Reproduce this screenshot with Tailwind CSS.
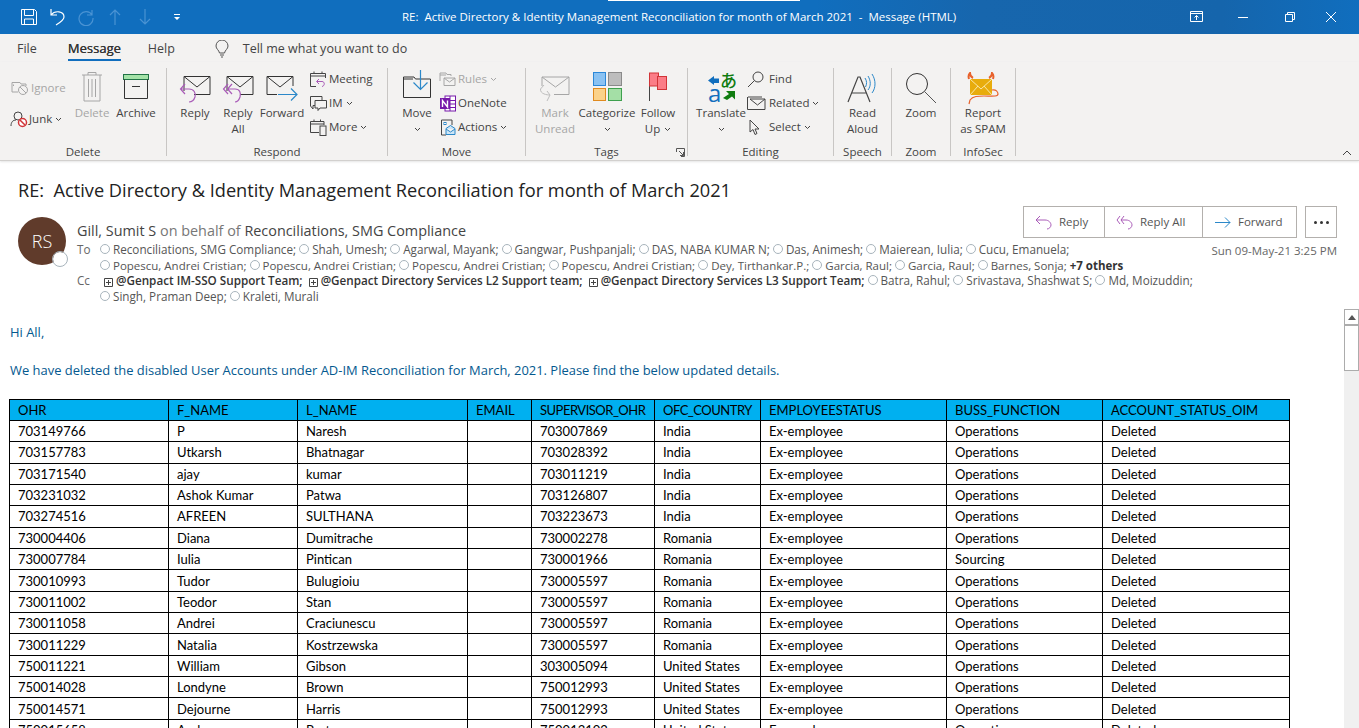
<!DOCTYPE html>
<html lang="en">
<head>
  <meta charset="UTF-8" />
  <title>RE: Active Directory &amp; Identity Management Reconciliation for month of March 2021 - Message (HTML)</title>
  <script src="https://cdn.jsdelivr.net/npm/@tailwindcss/browser@4"></script>
</head>
<body class="h-[728px] overflow-hidden bg-white font-['Open_Sans',sans-serif] text-[#444]">

  <!-- title bar -->
  <header class="relative flex h-[34px] items-center bg-[linear-gradient(90deg,#106ebe_60%,#1766ad_72%,#1565ac_90%,#106ebe)] text-white">
    <div class="absolute left-[608px] top-0 h-px w-[192px] bg-white"></div>
    <div class="flex w-[402px] items-center">
      <svg class="ml-[20px]" width="18" height="18" viewBox="0 0 18 18" fill="none" stroke="#fff"><path d="M1.5 1.5H14.5L16.5 3.5V16.5H1.5Z M4.5 1.5V7.5H13.5V1.5 M4.5 16.5V11H13.5V16.5"/></svg>
      <svg class="ml-[12px]" width="16" height="18" viewBox="0 0 16 18" fill="none" stroke="#fff" stroke-width="1.2"><path d="M1 1V7H7 M1 7C5 2 14 3 14 9C14 12 11 14 6 17"/></svg>
      <svg class="ml-[11px]" width="18" height="18" viewBox="0 0 18 18" fill="none" stroke="#4a93d3" stroke-width="1.2"><path d="M15 2V7H10 M15 7A7 7 0 1 0 16 10"/></svg>
      <svg class="ml-[14px]" width="12" height="18" viewBox="0 0 12 18" fill="none" stroke="#4a93d3" stroke-width="1.2"><path d="M6 17V2 M1 7L6 2L11 7"/></svg>
      <svg class="ml-[18px]" width="12" height="18" viewBox="0 0 12 18" fill="none" stroke="#4a93d3" stroke-width="1.2"><path d="M6 1V16 M1 11L6 16L11 11"/></svg>
      <svg class="ml-[22px]" width="8" height="8" viewBox="0 0 8 8" fill="#fff"><path d="M1 1H7V2H1Z M1 4H7L4 7Z"/></svg>
    </div>
    <div class="whitespace-pre text-[11.5px]">RE:  Active Directory &amp; Identity Management Reconciliation for month of March 2021  -  Message (HTML)</div>
    <div class="absolute right-0 top-0 flex h-[34px] items-center">
      <svg width="14" height="12" viewBox="0 0 14 12" fill="none" stroke="#fff"><path d="M.5 .5H12.5V10.5H.5Z M.5 2.5H12.5 M6.5 9V4.5 M4.5 6.5L6.5 4.5L8.5 6.5"/></svg>
      <div class="ml-[34px] h-px w-[10px] bg-white"></div>
      <svg class="ml-[37px]" width="10" height="10" viewBox="0 0 10 10" fill="none" stroke="#fff"><path d="M.5 2.5H7.5V9.5H.5Z M2.5 2.5V.5H9.5V7.5H7.5"/></svg>
      <svg class="ml-[31px] mr-[23px]" width="10" height="10" viewBox="0 0 10 10" fill="none" stroke="#fff"><path d="M0 0L10 10M10 0L0 10"/></svg>
    </div>
  </header>

  <!-- tabs -->
  <nav class="flex h-[28px] items-center bg-[#f3f2f1] pt-[2px] text-[12.5px] text-[#444]">
    <span class="ml-[17px]">File</span>
    <span class="relative ml-[31px] text-[13px] text-[#333] [text-shadow:0.3px_0_0_#333]">Message<span class="absolute -bottom-[2px] left-0 h-[2px] w-full bg-[#106ebe]"></span></span>
    <span class="ml-[27px]">Help</span>
    <svg class="ml-[40px]" width="14" height="18" viewBox="0 0 14 18" fill="none" stroke="#555"><path d="M4.5 13C4 10 1 9 1 6A6 6 0 0 1 13 6C13 9 10 10 9.500 13Z M5 15H9 M6 17H8"/></svg>
    <span class="ml-[14px]">Tell me what you want to do</span>
  </nav>

  <!-- ribbon -->
  <section class="flex h-[99px] items-start border-b border-[#d2d0ce] bg-[#f3f2f1] pt-[6px] text-[11.5px] leading-[16px] shadow-[0_1px_2px_#e5e5e5]">

    <!-- Delete -->
    <div class="flex h-[88px] w-[167px] flex-col border-r border-[#c8c6c4]">
      <div class="flex h-[78px]">
        <div class="ml-[10px] flex w-[62px] flex-col pt-[12px]">
          <div class="flex h-[16px] items-center text-[#a6a6a6]">
            <svg width="20" height="16" viewBox="0 0 20 16" fill="none" stroke="#a6a6a6"><path d="M2 2.500H10L11 4H16V6 M2 2.500V12H8 M3.500 4.500V6"/><circle cx="13" cy="10" r="4.500"/><path d="M10 7L16 13"/></svg>
            <span class="ml-[1px]">Ignore</span>
          </div>
          <div class="mt-[15px] flex h-[16px] items-center text-[#444]">
            <svg width="18" height="18" viewBox="0 0 18 18" fill="none" stroke="#444"><circle cx="8" cy="6" r="4"/><path d="M1 16C1 12 3 10 6 10"/><circle cx="12.500" cy="12.500" r="4" fill="#fff" stroke="#d13438" stroke-width="1.500"/><path d="M10 10L15 15" stroke="#d13438" stroke-width="1.500"/></svg>
            <span class="ml-[1px]">Junk</span>
            <svg class="ml-[3px]" width="7" height="5" viewBox="0 0 7 5" fill="none" stroke="#444"><path d="M1 1L3.500 3.500L6 1"/></svg>
          </div>
        </div>
        <div class="flex w-[40px] flex-col items-center text-[#a6a6a6]">
          <svg class="mt-[3px] h-[32px]" width="22" height="32" viewBox="0 0 22 32" fill="none" stroke="#a6a6a6"><path d="M1 4H21 M7 4V1.500H15V4 M3 4V30H19V4 M7.500 8V26 M11 8V26 M14.500 8V26"/></svg>
          <span class="mt-[2px]">Delete</span>
        </div>
        <div class="flex w-[48px] flex-col items-center">
          <svg class="mt-[5px] h-[30px]" width="28" height="30" viewBox="0 0 28 30" fill="none" stroke="#333"><rect x="1.500" y="1.500" width="25" height="5" fill="#a4e3a8" stroke="#217346"/><path d="M2.500 6.500V25.500H25.500V6.500 M10 13.500H18"/></svg>
          <span class="mt-[2px]">Archive</span>
        </div>
      </div>
      <div class="h-[10px] text-center leading-[12px]">Delete</div>
    </div>

    <!-- Respond -->
    <div class="flex h-[88px] w-[221px] flex-col border-r border-[#c8c6c4]">
      <div class="flex h-[78px] pl-[6px]">
        <div class="flex w-[44px] flex-col items-center">
          <svg class="mt-[2px]" width="32" height="35" viewBox="0 0 32 35" fill="none" stroke="#333"><path d="M5 21V6.500H31V24.500H15 M5 6.500L18 17L31 6.500"/><path d="M6 14L1.500 19L6 24 M2 19H10C15 19 17 23 16 27C15 30 13 32 10 32" stroke="#a95bb8" stroke-width="1.200"/></svg>
          <span>Reply</span>
        </div>
        <div class="flex w-[42px] flex-col items-center text-center">
          <svg class="mt-[2px]" width="32" height="35" viewBox="0 0 32 35" fill="none" stroke="#333"><path d="M5 21V6.500H31V24.500H18 M5 6.500L18 17L31 6.500"/><path d="M6 14L1.500 19L6 24 M10 14L5.500 19L10 24 M6 19H13C18 19 19 23 18 27C17 30 15 32 13 32" stroke="#a95bb8" stroke-width="1.200"/></svg>
          <span class="leading-[16px]">Reply<br>All</span>
        </div>
        <div class="flex w-[46px] flex-col items-center">
          <svg class="mt-[2px]" width="34" height="35" viewBox="0 0 34 35" fill="none" stroke="#333"><path d="M2 24.500V6.500H28V16 M12 24.500H2 M2 6.500L15 17L28 6.500"/><path d="M13 24.500H32 M26 18.500L32 24.500L26 30.500" stroke="#2b88c9" stroke-width="1.200"/></svg>
          <span>Forward</span>
        </div>
        <div class="-mt-px ml-[5px] flex flex-col">
          <div class="flex h-[24px] items-center"><svg width="17" height="17" viewBox="0 0 17 17" fill="none" stroke="#444"><path d="M.5 2.500H15.500V7 M.5 5H15.500 M.5 2.500V15.500H6 M4 .5V2.500 M12 .5V2.500"/><path d="M9 8L6.500 10.500L9 13 M7 10.500H12C15 10.500 15 15 12 15.500" stroke="#a95bb8"/></svg><span class="ml-[2px]">Meeting</span></div>
          <div class="flex h-[24px] items-center"><svg width="17" height="17" viewBox="0 0 17 17" fill="none" stroke="#444"><path d="M5 10.500H3V14L.5 11V1.500H12V5 M5 5.500H16.500V13H10L8 15.500V13H5Z"/></svg><span class="ml-[2px]">IM</span><svg class="ml-[3px]" width="7" height="5" viewBox="0 0 7 5" fill="none" stroke="#444"><path d="M1 1L3.500 3.500L6 1"/></svg></div>
          <div class="flex h-[24px] items-center"><svg width="17" height="17" viewBox="0 0 17 17" fill="none" stroke="#444"><path d="M9 13.500H.5V2.500H14V6 M.5 5H14 M4 .5V2.500 M10.500 .5V2.500"/><rect x="10" y="7" width="6" height="9.500"/></svg><span class="ml-[2px]">More</span><svg class="ml-[3px]" width="7" height="5" viewBox="0 0 7 5" fill="none" stroke="#444"><path d="M1 1L3.500 3.500L6 1"/></svg></div>
        </div>
      </div>
      <div class="h-[10px] text-center leading-[12px]">Respond</div>
    </div>

    <!-- Move -->
    <div class="flex h-[88px] w-[138px] flex-col border-r border-[#c8c6c4]">
      <div class="flex h-[78px] pl-[7px]">
        <div class="flex w-[44px] flex-col items-center">
          <svg class="mt-[1px]" width="30" height="30" viewBox="0 0 30 30" fill="none" stroke="#333"><path d="M1.500 28.500V8H12L13.500 10H28.500V28.500Z M1.500 10H11"/><path d="M18.500 1V20 M11.500 13.500L18.500 20.500L25.500 13.500" stroke="#2b88c9" stroke-width="1.200"/></svg>
          <span class="mt-[6px]">Move</span>
          <svg class="mt-[6px]" width="7" height="5" viewBox="0 0 7 5" fill="none" stroke="#444"><path d="M1 1L3.500 3.500L6 1"/></svg>
        </div>
        <div class="-mt-px flex flex-col">
          <div class="flex h-[24px] items-center text-[#a6a6a6]"><svg width="17" height="17" viewBox="0 0 17 17" fill="none" stroke="#a6a6a6"><path d="M1 10V2H7L8 3.500H12V5 M1 4H7 M5 7H16V14.500H5Z M5 7L10.500 11L16 7"/></svg><span class="ml-[2px]">Rules</span><svg class="ml-[3px]" width="7" height="5" viewBox="0 0 7 5" fill="none" stroke="#a6a6a6"><path d="M1 1L3.500 3.500L6 1"/></svg></div>
          <div class="flex h-[24px] items-center"><svg width="17" height="17" viewBox="0 0 17 17" fill="none"><rect x="6" y="1" width="10.500" height="15" fill="#fff" stroke="#7719aa"/><path d="M11 1V16 M11 5.500H16.500 M11 9H16.500 M11 12.500H16.500" stroke="#7719aa"/><rect x="1" y="3" width="10" height="11" fill="#7719aa"/><path d="M3.500 12V5.500L8.500 12V5.500" stroke="#fff" stroke-width="1.400"/></svg><span class="ml-[2px]">OneNote</span></div>
          <div class="flex h-[24px] items-center"><svg class="ml-[2px]" width="15" height="17" viewBox="0 0 15 17" fill="none" stroke="#444"><path d="M5 16H.5V1H11V6"/><rect x="3" y="3.500" width="2" height="2" stroke="#2b88c9"/><path d="M5 9.500L9.500 6.500L14 9.500V15.500H5Z M5 10L9.500 13L14 10" stroke="#2b88c9" fill="#cde6f7"/></svg><span class="ml-[2px]">Actions</span><svg class="ml-[3px]" width="7" height="5" viewBox="0 0 7 5" fill="none" stroke="#444"><path d="M1 1L3.500 3.500L6 1"/></svg></div>
        </div>
      </div>
      <div class="h-[10px] text-center leading-[12px]">Move</div>
    </div>

    <!-- Tags -->
    <div class="relative flex h-[88px] w-[162px] flex-col border-r border-[#c8c6c4]">
      <div class="flex h-[78px] pl-[9px]">
        <div class="flex w-[40px] flex-col items-center text-center text-[#a6a6a6]">
          <svg class="mt-[2px]" width="32" height="35" viewBox="0 0 32 35" fill="none" stroke="#a6a6a6"><path d="M3 16V7H30V24.500H15 M3 7L16.500 17L30 7"/><path d="M5 15L1.500 19C1 24 8 25 11 25 M11 25L8 21 M11 25L8 31" stroke="#bdbdbd"/></svg>
          <span>Mark<br>Unread</span>
        </div>
        <div class="flex w-[64px] flex-col items-center">
          <div class="mt-[4px] grid h-[29px] w-[29px] grid-cols-2 gap-[2px]">
            <div class="border border-[#2b88d8] bg-[#8ac2f2]"></div>
            <div class="border border-[#8a8a8a] bg-[#bdbdbd]"></div>
            <div class="border border-[#e08a1e] bg-[#fbd28a]"></div>
            <div class="border border-[#3ea04e] bg-[#a4dfa6]"></div>
          </div>
          <span class="mt-[4px]">Categorize</span>
          <svg class="mt-[6px]" width="7" height="5" viewBox="0 0 7 5" fill="none" stroke="#444"><path d="M1 1L3.500 3.500L6 1"/></svg>
        </div>
        <div class="flex w-[38px] flex-col items-center text-center">
          <svg class="mt-[4px]" width="22" height="33" viewBox="0 0 22 33" fill="none"><path d="M2.500 1V29" stroke="#444"/><rect x="2.500" y="1" width="9" height="13" fill="#fb7d87" stroke="#d13438"/><rect x="10.500" y="4.500" width="9" height="13" fill="#fb7d87" stroke="#d13438"/></svg>
          <span>Follow</span>
          <span class="flex items-center">Up<svg class="ml-[4px]" width="7" height="5" viewBox="0 0 7 5" fill="none" stroke="#444"><path d="M1 1L3.500 3.500L6 1"/></svg></span>
        </div>
      </div>
      <div class="h-[10px] text-center leading-[12px]">Tags</div>
      <svg class="absolute -bottom-px right-[2px]" width="9" height="9" viewBox="0 0 9 9" fill="none" stroke="#555"><path d="M.5 4V.5H8.500V8.500H5 M3 3L7.500 7.500 M7.500 4V7.500H4"/></svg>
    </div>

    <!-- Editing -->
    <div class="flex h-[88px] w-[146px] flex-col border-r border-[#c8c6c4]">
      <div class="flex h-[78px] pl-[7px]">
        <div class="flex w-[52px] flex-col items-center">
          <div class="relative mt-[4px] h-[33px] w-[30px]">
            <svg class="absolute left-0 top-0" width="30" height="33" viewBox="0 0 30 33"><path d="M2 8.500L8 4V13Z" fill="#106ebe"/><path d="M7 6.500H13V11H7Z" fill="#106ebe"/><path d="M17 26L23 22L20 19H29V27.500L26 24.500L21 28Z" fill="#107c10"/></svg>
            <span class="absolute left-[2px] top-[11px] text-[24px] leading-[20px] text-[#106ebe]">a</span>
            <span class="absolute left-[14px] -top-[3px] font-['Noto_Sans_CJK_JP',sans-serif] text-[17px] font-medium leading-[22px] text-[#107c10]">あ</span>
          </div>
          <span>Translate</span>
          <svg class="mt-[6px]" width="7" height="5" viewBox="0 0 7 5" fill="none" stroke="#444"><path d="M1 1L3.500 3.500L6 1"/></svg>
        </div>
        <div class="-mt-px flex flex-col">
          <div class="flex h-[24px] items-center"><svg width="19" height="17" viewBox="0 0 19 17" fill="none" stroke="#444"><circle cx="11" cy="6" r="5"/><path d="M7.500 9.500L1 16"/></svg><span class="ml-[3px]">Find</span></div>
          <div class="flex h-[24px] items-center"><svg width="19" height="15" viewBox="0 0 19 15" fill="none" stroke="#444"><path d="M1 1H15 M.5 1V13.500H18V3H3 M3 3L10.500 9L18 3"/></svg><span class="ml-[3px]">Related</span><svg class="ml-[3px]" width="7" height="5" viewBox="0 0 7 5" fill="none" stroke="#444"><path d="M1 1L3.500 3.500L6 1"/></svg></div>
          <div class="flex h-[24px] items-center"><svg width="19" height="17" viewBox="0 0 19 17" fill="none" stroke="#444"><path d="M3 1V13L6 10.500L8 15.500L10 14.500L8 10H12Z"/></svg><span class="ml-[3px]">Select</span><svg class="ml-[3px]" width="7" height="5" viewBox="0 0 7 5" fill="none" stroke="#444"><path d="M1 1L3.500 3.500L6 1"/></svg></div>
        </div>
      </div>
      <div class="h-[10px] text-center leading-[12px]">Editing</div>
    </div>

    <!-- Speech -->
    <div class="flex h-[88px] w-[58px] flex-col items-center border-r border-[#c8c6c4]">
      <div class="flex h-[78px] flex-col items-center text-center">
        <svg class="mt-[5px]" width="32" height="32" viewBox="0 0 32 32" fill="none"><path d="M1 29L11 4H13L23 29 M5 20H19" stroke="#444" stroke-width="1.200"/><path d="M18 5C20 8 20 11 18.500 14 M21 3C24 8 24 13 21 17 M25 1C29 7 29 15 25 20" stroke="#2b88c9"/></svg>
        <span>Read<br>Aloud</span>
      </div>
      <div class="h-[10px] leading-[12px]">Speech</div>
    </div>

    <!-- Zoom -->
    <div class="flex h-[88px] w-[59px] flex-col items-center border-r border-[#c8c6c4]">
      <div class="flex h-[78px] flex-col items-center">
        <svg class="mt-[4px]" width="32" height="33" viewBox="0 0 32 33" fill="none" stroke="#333"><circle cx="12" cy="12" r="10.500"/><path d="M19.500 19.500L31 31" stroke="#555"/></svg>
        <span>Zoom</span>
      </div>
      <div class="h-[10px] leading-[12px]">Zoom</div>
    </div>

    <!-- InfoSec -->
    <div class="flex h-[88px] w-[65px] flex-col items-center border-r border-[#c8c6c4]">
      <div class="flex h-[78px] flex-col items-center text-center">
        <svg class="mt-[4px]" width="34" height="33" viewBox="0 0 34 33" fill="none"><path d="M3 7C2 4 3 2 4 1C4 3 5 5 7 6 M27 7C28 4 27 2 26 1C26 3 25 5 23 6" stroke="#e8622c" stroke-width="2"/><rect x="4" y="7" width="22" height="16" fill="#e8ac0c"/><path d="M4 7L15 17L26 7 M4 23L12 14 M26 23L18 14" stroke="#fbe7a8"/><path d="M26 18C30 17 32 20 32 22C32 25 25 24 18 24C12 24 7 24 4 28L3 32" stroke="#e8622c" stroke-width="1.200"/></svg>
        <span>Report<br>as SPAM</span>
      </div>
      <div class="h-[10px] leading-[12px]">InfoSec</div>
    </div>

    <div class="relative h-full flex-1">
      <svg class="absolute bottom-[4px] right-[7px]" width="10" height="6" viewBox="0 0 10 6" fill="none" stroke="#444"><path d="M1 5L5 1L9 5"/></svg>
    </div>
  </section>

  <!-- message header -->
  <section class="relative h-[148px]">
    <h1 class="whitespace-pre pl-[18px] pt-[17px] text-[18.2px] leading-[24px] text-[#222]">RE:  Active Directory &amp; Identity Management Reconciliation for month of March 2021</h1>

    <div class="mt-[15px] flex pl-[18px]">
      <div class="relative flex h-[48px] w-[48px] shrink-0 items-center justify-center rounded-full bg-[#603b2b] text-[18px] font-light text-white">
        RS
        <span class="absolute -bottom-[1px] -right-[1px] h-[14px] w-[14px] rounded-full border-2 border-white bg-white outline outline-[#a8b4bc]"></span>
      </div>
      <div class="ml-[11px] flex-1 pt-[4px]">
        <div class="h-[21px] text-[14.4px] leading-[20px] text-[#444]">Gill, Sumit S <span class="text-[#777]">on behalf of</span> Reconciliations, SMG Compliance</div>
        <div class="text-[11.7px] leading-[15.7px] text-[#555] [&_i]:mr-[3px] [&_i]:inline-block [&_i]:h-[10px] [&_i]:w-[10px] [&_i]:rounded-full [&_i]:border [&_i]:border-[#a8b4bc]">
          <div class="flex whitespace-pre"><span class="w-[23px] text-[#666]">To</span><span><i></i>Reconciliations, SMG Compliance; <i></i>Shah, Umesh; <i></i>Agarwal, Mayank; <i></i>Gangwar, Pushpanjali; <i></i>DAS, NABA KUMAR N; <i></i>Das, Animesh; <i></i>Maierean, Iulia; <i></i>Cucu, Emanuela;</span></div>
          <div class="whitespace-pre pl-[23px] text-[11.5px]"><i></i>Popescu, Andrei Cristian; <i></i>Popescu, Andrei Cristian; <i></i>Popescu, Andrei Cristian; <i></i>Popescu, Andrei Cristian; <i></i>Dey, Tirthankar.P.; <i></i>Garcia, Raul; <i></i>Garcia, Raul; <i></i>Barnes, Sonja; <b class="font-bold text-[#333]">+7 others</b></div>
          <div class="flex whitespace-pre"><span class="w-[27px] text-[#666]">Cc</span><span><b class="font-semibold text-[#333]"><svg class="mr-[3px] inline-block" width="9" height="9" viewBox="0 0 9 9" fill="none" stroke="#444"><path d="M.5 .5H8.500V8.500H.5Z M4.500 2V7 M2 4.500H7"/></svg>@Genpact IM-SSO Support Team;</b>  <b class="font-semibold text-[#333]"><svg class="mr-[3px] inline-block" width="9" height="9" viewBox="0 0 9 9" fill="none" stroke="#444"><path d="M.5 .5H8.500V8.500H.5Z M4.500 2V7 M2 4.500H7"/></svg>@Genpact Directory Services L2 Support team;</b>  <b class="font-semibold text-[#333]"><svg class="mr-[3px] inline-block" width="9" height="9" viewBox="0 0 9 9" fill="none" stroke="#444"><path d="M.5 .5H8.500V8.500H.5Z M4.500 2V7 M2 4.500H7"/></svg>@Genpact Directory Services L3 Support Team;</b> <i></i>Batra, Rahul; <i></i>Srivastava, Shashwat S; <i></i>Md, Moizuddin;</span></div>
          <div class="whitespace-pre pl-[23px]"><i></i>Singh, Praman Deep; <i></i>Kraleti, Murali</div>
        </div>
      </div>
    </div>

    <!-- reply buttons -->
    <div class="absolute right-[22px] top-[45px] flex flex-col items-end">
      <div class="flex h-[32px] text-[11.5px] text-[#555]">
        <div class="flex h-full border border-[#b3b0ad]">
          <div class="flex w-[81px] items-center border-r border-[#b3b0ad] pl-[11px]"><svg width="17" height="15" viewBox="0 0 17 15" fill="none" stroke="#a95bb8"><path d="M5 1L1 5L5 9 M1 5H10C14 5 16 8 16 10C16 12 14 14 12 14"/></svg><span class="ml-[7px]">Reply</span></div>
          <div class="flex w-[98px] items-center border-r border-[#b3b0ad] pl-[11px]"><svg width="17" height="15" viewBox="0 0 17 15" fill="none" stroke="#a95bb8"><path d="M4 1L1 5L4 9 M8 1L5 5L8 9 M5 5H10C14 5 16 8 16 10C16 12 14 14 12 14"/></svg><span class="ml-[7px]">Reply All</span></div>
          <div class="flex w-[93px] items-center pl-[11px]"><svg width="17" height="15" viewBox="0 0 17 15" fill="none" stroke="#2b88c9"><path d="M1 7.500H16 M11 2.500L16 7.500L11 12.500"/></svg><span class="ml-[7px]">Forward</span></div>
        </div>
        <div class="ml-[8px] flex w-[32px] items-center justify-center gap-[3px] border border-[#b3b0ad]">
          <span class="h-[3px] w-[3px] rounded-full bg-[#333]"></span><span class="h-[3px] w-[3px] rounded-full bg-[#333]"></span><span class="h-[3px] w-[3px] rounded-full bg-[#333]"></span>
        </div>
      </div>
      <div class="mt-[5px] text-[11.5px] leading-[16px] text-[#666]">Sun 09-May-21 3:25 PM</div>
    </div>
  </section>

  <!-- message body -->
  <section class="flex h-[419px]">
    <div class="flex-1 overflow-hidden pl-[9px]">
      <p class="pl-px pt-[14px] text-[12.95px] leading-[18px] text-[#04598f]">Hi All,</p>
      <p class="mt-[20px] pl-px text-[12.95px] leading-[18px] text-[#04598f]">We have deleted the disabled User Accounts under AD-IM Reconciliation for March, 2021. Please find the below updated details.</p>
      <table class="mt-[19.6px] w-[1280px] table-fixed border-collapse font-['Lato',sans-serif] text-[13px] text-black [&_td]:border [&_td]:border-black [&_td]:px-[8px] [&_td]:py-0 [&_td]:leading-[20px] [&_th]:border [&_th]:border-black [&_th]:px-[8px] [&_th]:py-0 [&_th]:text-left [&_th]:font-normal [&_th]:leading-[20px] [&_tr]:h-[21.35px]">
        <colgroup>
          <col class="w-[159px]"><col class="w-[129px]"><col class="w-[170px]"><col class="w-[64px]"><col class="w-[123px]"><col class="w-[106px]"><col class="w-[186px]"><col class="w-[156px]"><col class="w-[187px]">
        </colgroup>
        <thead>
          <tr class="bg-[#00b0f0]"><th>OHR</th><th>F_NAME</th><th>L_NAME</th><th>EMAIL</th><th class="tracking-[-0.5px]">SUPERVISOR_OHR</th><th class="tracking-[-0.5px]">OFC_COUNTRY</th><th>EMPLOYEESTATUS</th><th>BUSS_FUNCTION</th><th>ACCOUNT_STATUS_OIM</th></tr>
        </thead>
        <tbody>
          <tr><td>703149766</td><td>P</td><td>Naresh</td><td></td><td>703007869</td><td>India</td><td>Ex-employee</td><td>Operations</td><td>Deleted</td></tr>
          <tr><td>703157783</td><td>Utkarsh</td><td>Bhatnagar</td><td></td><td>703028392</td><td>India</td><td>Ex-employee</td><td>Operations</td><td>Deleted</td></tr>
          <tr><td>703171540</td><td>ajay</td><td>kumar</td><td></td><td>703011219</td><td>India</td><td>Ex-employee</td><td>Operations</td><td>Deleted</td></tr>
          <tr><td>703231032</td><td>Ashok Kumar</td><td>Patwa</td><td></td><td>703126807</td><td>India</td><td>Ex-employee</td><td>Operations</td><td>Deleted</td></tr>
          <tr><td>703274516</td><td>AFREEN</td><td>SULTHANA</td><td></td><td>703223673</td><td>India</td><td>Ex-employee</td><td>Operations</td><td>Deleted</td></tr>
          <tr><td>730004406</td><td>Diana</td><td>Dumitrache</td><td></td><td>730002278</td><td>Romania</td><td>Ex-employee</td><td>Operations</td><td>Deleted</td></tr>
          <tr><td>730007784</td><td>Iulia</td><td>Pintican</td><td></td><td>730001966</td><td>Romania</td><td>Ex-employee</td><td>Sourcing</td><td>Deleted</td></tr>
          <tr><td>730010993</td><td>Tudor</td><td>Bulugioiu</td><td></td><td>730005597</td><td>Romania</td><td>Ex-employee</td><td>Operations</td><td>Deleted</td></tr>
          <tr><td>730011002</td><td>Teodor</td><td>Stan</td><td></td><td>730005597</td><td>Romania</td><td>Ex-employee</td><td>Operations</td><td>Deleted</td></tr>
          <tr><td>730011058</td><td>Andrei</td><td>Craciunescu</td><td></td><td>730005597</td><td>Romania</td><td>Ex-employee</td><td>Operations</td><td>Deleted</td></tr>
          <tr><td>730011229</td><td>Natalia</td><td>Kostrzewska</td><td></td><td>730005597</td><td>Romania</td><td>Ex-employee</td><td>Operations</td><td>Deleted</td></tr>
          <tr><td>750011221</td><td>William</td><td>Gibson</td><td></td><td>303005094</td><td>United States</td><td>Ex-employee</td><td>Operations</td><td>Deleted</td></tr>
          <tr><td>750014028</td><td>Londyne</td><td>Brown</td><td></td><td>750012993</td><td>United States</td><td>Ex-employee</td><td>Operations</td><td>Deleted</td></tr>
          <tr><td>750014571</td><td>Dejourne</td><td>Harris</td><td></td><td>750012993</td><td>United States</td><td>Ex-employee</td><td>Operations</td><td>Deleted</td></tr>
          <tr><td>750015658</td><td>Andrew</td><td>Porter</td><td></td><td>750013102</td><td>United States</td><td>Ex-employee</td><td>Operations</td><td>Deleted</td></tr>
        </tbody>
      </table>
    </div>
    <!-- scrollbar -->
    <div class="flex w-[15px] flex-col bg-[#f0f0f0]">
      <div class="flex h-[16px] items-center justify-center border border-[#acacac] bg-white">
        <svg width="8" height="5" viewBox="0 0 8 5" fill="#555"><path d="M0 5L4 0L8 5Z"/></svg>
      </div>
      <div class="h-[46px] border border-[#acacac] bg-white"></div>
    </div>
  </section>
</body>
</html>
